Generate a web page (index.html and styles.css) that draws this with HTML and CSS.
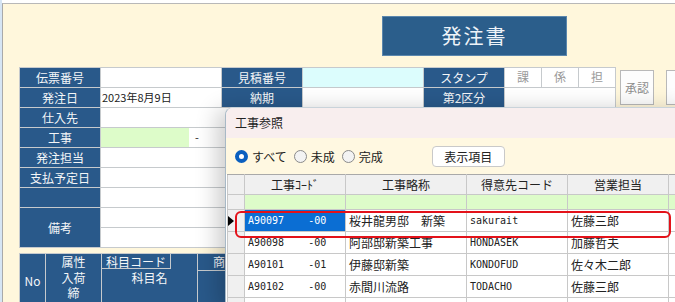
FILE: index.html
```html
<!DOCTYPE html>
<html lang="ja">
<head>
  <meta charset="UTF-8">
  <meta name="viewport" content="width=device-width, initial-scale=1.0">
  <title>発注書</title>
  <link rel="stylesheet" href="styles.css">
</head>
<body>
  <div class="frame">
    <div class="page">
      <div class="head">
        <div class="title">発注書</div>
      </div>

      <div class="top">
        <div class="form">
          <div class="lbl">伝票番号</div>
          <div class="val"></div>
          <div class="lbl">見積番号</div>
          <div class="val cyan"></div>
          <div class="lbl">スタンプ</div>
          <div class="stamp">課</div>
          <div class="stamp">係</div>
          <div class="stamp">担</div>

          <div class="lbl">発注日</div>
          <div class="val">2023年8月9日</div>
          <div class="lbl">納期</div>
          <div class="val"></div>
          <div class="lbl">第2区分</div>
          <div class="val span3"></div>

          <div class="lbl">仕入先</div>
          <div class="val wide"></div>
          <div class="lbl">工事</div>
          <div class="val wide split"><span class="green"></span><span class="dash">-</span></div>
          <div class="lbl">発注担当</div>
          <div class="val wide"></div>
          <div class="lbl">支払予定日</div>
          <div class="val wide"></div>
          <div class="lbl"></div>
          <div class="val wide"></div>
          <div class="lbl tall">備考</div>
          <div class="val wide"></div>
          <div class="val wide"></div>
        </div>
        <div class="approve">承認</div>
        <div class="approve"></div>
      </div>

      <div class="detail">
        <div class="dcell no">No</div>
        <div class="dcell attr">属性<br>入荷<br>締</div>
        <div class="dcell subject">
          <div class="code">科目コード</div>
          <div class="sname">科目名</div>
        </div>
        <div class="dcell goods">
          <div class="gtop">商</div>
        </div>
      </div>
    </div>

    <div class="dialog">
      <div class="dlg-title">工事参照</div>
      <div class="dlg-tools">
        <label class="opt"><span class="radio on"></span>すべて</label>
        <label class="opt"><span class="radio"></span>未成</label>
        <label class="opt"><span class="radio"></span>完成</label>
        <button class="btn">表示項目</button>
      </div>
      <table class="grid">
        <colgroup>
          <col class="c-rh"><col class="c-code"><col class="c-name"><col class="c-cust"><col class="c-rep"><col class="c-end">
        </colgroup>
        <tr class="hdr">
          <th></th><th>工事ｺｰﾄﾞ</th><th>工事略称</th><th>得意先コード</th><th>営業担当</th><th></th>
        </tr>
        <tr class="filter">
          <td class="rh"></td><td></td><td></td><td></td><td></td><td></td>
        </tr>
        <tr class="sel">
          <td class="rh"><span class="arrow"></span></td>
          <td class="mono cur">A90097    -00</td>
          <td>桜井龍男邸　新築</td>
          <td class="mono">sakurait</td>
          <td>佐藤三郎</td><td></td>
        </tr>
        <tr>
          <td class="rh"></td>
          <td class="mono">A90098    -00</td>
          <td>阿部邸新築工事</td>
          <td class="mono">HONDASEK</td>
          <td>加藤哲夫</td><td></td>
        </tr>
        <tr>
          <td class="rh"></td>
          <td class="mono">A90101    -01</td>
          <td>伊藤邸新築</td>
          <td class="mono">KONDOFUD</td>
          <td>佐々木二郎</td><td></td>
        </tr>
        <tr>
          <td class="rh"></td>
          <td class="mono">A90102    -00</td>
          <td>赤間川流路</td>
          <td class="mono">TODACHO</td>
          <td>佐藤三郎</td><td></td>
        </tr>
        <tr>
          <td class="rh"></td><td></td><td></td><td></td><td></td><td></td>
        </tr>
      </table>
    </div>

    <div class="mark"></div>
  </div>
</body>
</html>
```

FILE: styles.css
```css
body {
  margin: 0;
  background: #ffffff;
  font-family: "Noto Sans CJK JP", "Noto Sans", sans-serif;
  font-size: 12px;
  color: #222;
}
.frame {
  position: relative;
  width: 675px;
  height: 302px;
  overflow: hidden;
  border-left: 2px solid #d6e5f4;
  box-sizing: border-box;
}
.page {
  margin-top: 3px;
  height: 299px;
  background: #fff7dc;
  border-left: 1px solid #a9a9a9;
  border-top: 1px solid #b8b8b8;
  padding-left: 16px;
  box-sizing: border-box;
}
.head {
  height: 63px;
  padding-left: 363px;
  padding-top: 12px;
  box-sizing: border-box;
}
.title {
  width: 185px;
  height: 40px;
  background: #2b5e8b;
  border: 1px solid #5b87ad;
  box-sizing: border-box;
  color: #eef3f8;
  font-size: 20px;
  letter-spacing: 2px;
  text-align: center;
  line-height: 38px;
}
.top {
  display: flex;
  align-items: flex-start;
}
.form {
  display: grid;
  grid-template-columns: 80px 120px 80px 120px 80px 36px 36px 36px;
  grid-auto-rows: 19px;
  gap: 1px;
  background: #c6cacd;
  border: 1px solid #c6cacd;
}
.lbl {
  background: #29598a;
  color: #f4f6f8;
  text-align: center;
  line-height: 19px;
}
.lbl.tall {
  grid-row: span 2;
  line-height: 39px;
}
.val {
  background: #ffffff;
  font-size: 11px;
  line-height: 19px;
  padding-left: 1px;
}
.val.cyan {
  background: #dcfdfd;
}
.val.span3 {
  grid-column: span 3;
}
.val.wide {
  grid-column: 2 / -1;
}
.split {
  display: flex;
  padding-left: 0;
}
.green {
  width: 88px;
  background: #ddfcc9;
}
.dash {
  margin-left: 6px;
}
.stamp {
  background: #ffffff;
  color: #9a9a9a;
  text-align: center;
  line-height: 17px;
}
.approve {
  width: 34px;
  height: 35px;
  margin: 3px 0 0 4px;
  background: #fdfdfd;
  border: 1px solid #b9b9b9;
  box-sizing: border-box;
  color: #8d8d8d;
  text-align: center;
  line-height: 33px;
  flex-shrink: 0;
}
.approve + .approve {
  margin-left: 12px;
}
.detail {
  display: grid;
  grid-template-columns: 25px 55px 95px 1fr;
  gap: 1px;
  width: 206px;
  height: 52px;
  margin-top: 5px;
  background: #c6cacd;
  border: 1px solid #c6cacd;
  border-bottom: none;
}
.dcell {
  background: #29598a;
  color: #f4f6f8;
  overflow: hidden;
}
.no {
  display: flex;
  align-items: center;
  justify-content: center;
}
.attr {
  text-align: center;
  line-height: 15.5px;
}
.code {
  width: 69px;
  height: 15px;
  border-right: 1px solid #c6cacd;
  border-bottom: 1px solid #c6cacd;
  line-height: 15px;
  padding-left: 4px;
  box-sizing: border-box;
}
.sname {
  text-align: center;
  line-height: 17px;
}
.gtop {
  height: 16px;
  border-bottom: 1px solid #c6cacd;
  padding-left: 15px;
  line-height: 15px;
}

/* 工事参照 window */
.dialog {
  position: absolute;
  left: 223px;
  top: 107px;
  width: 470px;
  height: 200px;
  background: #ffffff;
  border-left: 1px solid #a8b9c6;
  border-top: 1px solid #c9d3da;
  border-radius: 8px 0 0 0;
  overflow: hidden;
  box-shadow: -8px 2px 22px rgba(0, 0, 0, 0.2);
}
.dlg-title {
  height: 30px;
  background: #f8eeee;
  padding-left: 9px;
  line-height: 29px;
}
.dlg-tools {
  display: flex;
  align-items: center;
  height: 36px;
  background: #fff8e1;
  padding-left: 9px;
}
.opt {
  display: flex;
  align-items: center;
  gap: 4px;
  margin-right: 7px;
}
.radio {
  width: 13px;
  height: 13px;
  border-radius: 50%;
  border: 1px solid #8a8a8a;
  background: #f3f3f3;
  box-sizing: border-box;
}
.radio.on {
  border: 4px solid #0a5fbf;
  background: #ffffff;
}
.btn {
  margin-left: 42px;
  width: 73px;
  height: 21px;
  padding: 0;
  background: #ffffff;
  border: 1px solid #c9c9c9;
  border-radius: 4px;
  font: inherit;
  color: #222;
}
.grid {
  border-collapse: collapse;
  table-layout: fixed;
  width: 462px;
  margin-left: 1px;
}
.c-rh { width: 17px; }
.c-code { width: 101px; }
.c-name { width: 121px; }
.c-cust { width: 101px; }
.c-rep { width: 101px; }
.c-end { width: 21px; }
.grid th,
.grid td {
  border: 1px solid #c8c8c8;
  padding: 0 0 0 3px;
  white-space: pre;
  overflow: hidden;
  text-align: left;
}
.grid th {
  height: 19px;
  background: #f0f0f0;
  font-weight: normal;
  text-align: center;
  padding: 0;
  border-top-color: #a9a9a9;
}
.grid .rh {
  background: #f0f0f0;
  padding: 0;
}
.filter td {
  height: 14px;
  background: #ddfcc9;
}
.grid tr:not(.hdr):not(.filter) td {
  height: 21px;
}
.mono {
  font-family: "DejaVu Sans Mono", "Liberation Mono", monospace;
  font-size: 10px;
}
.cur {
  background: #0b6ed3;
  color: #ffffff;
}
.arrow {
  display: block;
  width: 0;
  height: 0;
  border-left: 6px solid #000;
  border-top: 5px solid transparent;
  border-bottom: 5px solid transparent;
}
.mark {
  position: absolute;
  left: 233px;
  top: 211px;
  width: 436px;
  height: 27px;
  border: 2px solid #e3121a;
  border-radius: 6px;
  box-sizing: border-box;
}
```
